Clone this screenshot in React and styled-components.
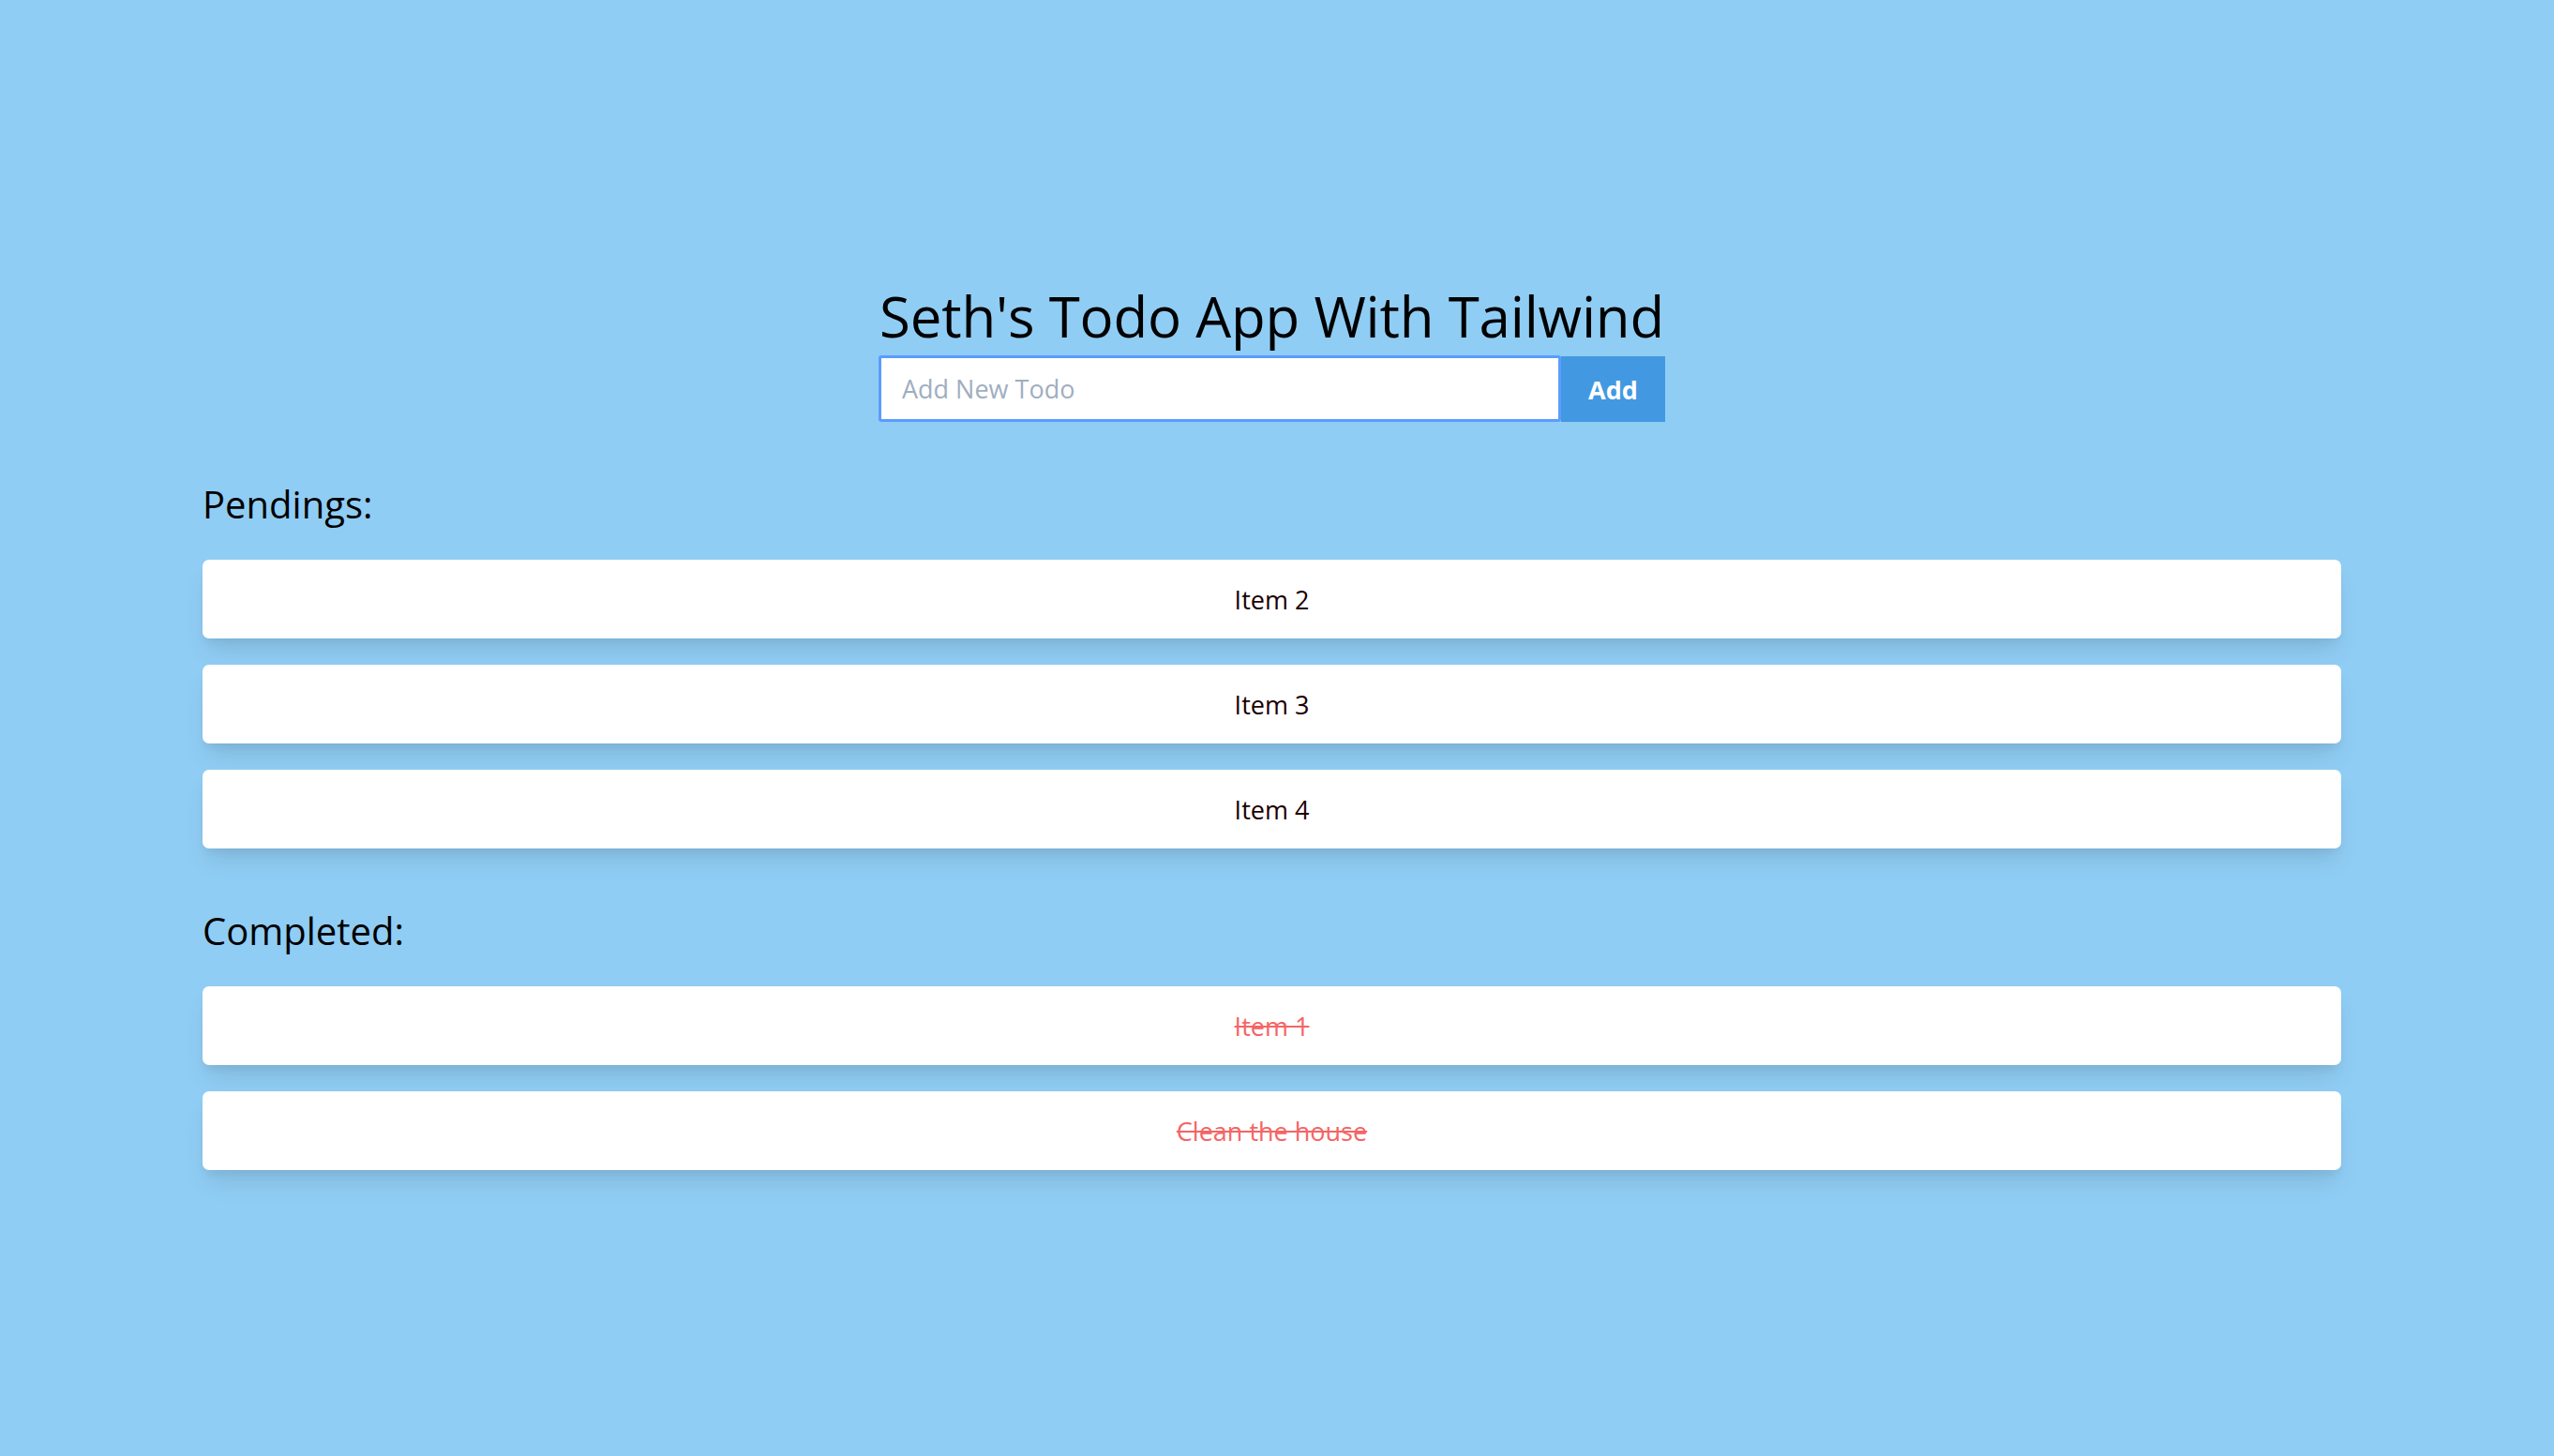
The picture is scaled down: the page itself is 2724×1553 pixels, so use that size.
import React, { useState } from 'react'
import styled, { createGlobalStyle } from 'styled-components'

const GlobalStyle = createGlobalStyle`
  html, body {
    margin: 0;
    padding: 0;
    background: #90cdf4;
    font-family: "Open Sans", "Noto Sans", sans-serif;
    color: #000;
  }
  * { box-sizing: border-box; }
`

const App = () => {
  const [todos] = useState([
    { id: 1, text: 'Item 1', done: true },
    { id: 2, text: 'Item 2', done: false },
    { id: 3, text: 'Item 3', done: false },
    { id: 4, text: 'Item 4', done: false },
    { id: 5, text: 'Clean the house', done: true },
  ])
  const [value, setValue] = useState('')

  const pending = todos.filter((t) => !t.done)
  const completed = todos.filter((t) => t.done)

  return (
    <Page>
      <GlobalStyle />
      <Header>
        <Title>Seth's Todo App With Tailwind</Title>
        <Form onSubmit={(e) => e.preventDefault()}>
          <Input
            placeholder="Add New Todo"
            value={value}
            onChange={(e) => setValue(e.target.value)}
          />
          <AddButton type="submit">Add</AddButton>
        </Form>
      </Header>

      <Section>
        <Label>Pendings:</Label>
        <List>
          {pending.map((t) => (
            <Card key={t.id}>
              <ItemText>{t.text}</ItemText>
            </Card>
          ))}
        </List>
      </Section>

      <Section>
        <Label>Completed:</Label>
        <List>
          {completed.map((t) => (
            <Card key={t.id}>
              <ItemText done>{t.text}</ItemText>
            </Card>
          ))}
        </List>
      </Section>
    </Page>
  )
}

export default App

const Page = styled.div`
  min-height: 100vh;
  padding: 302px 227px 120px 216px;
  background: #90cdf4;
`

const Header = styled.div`
  display: flex;
  flex-direction: column;
  align-items: center;
`

const Title = styled.h1`
  margin: 0 0 7px;
  font-size: 60px;
  line-height: 70px;
  font-weight: 400;
  letter-spacing: -0.2px;
`

const Form = styled.form`
  display: flex;
  width: 839px;
  height: 71px;
`

const Input = styled.input`
  flex: 1;
  min-width: 0;
  height: 100%;
  padding: 0 22px;
  border: 3px solid #5b9cff;
  border-radius: 3px;
  background: #fff;
  font-family: inherit;
  font-size: 27px;
  color: #2d3748;
  outline: none;

  &::placeholder {
    color: #a0aec0;
  }
`

const AddButton = styled.button`
  width: 111px;
  margin: 1px 0 0;
  border: none;
  background: #4299e1;
  color: #fff;
  font-family: inherit;
  font-size: 27px;
  font-weight: 700;
  cursor: pointer;
`

const Section = styled.section`
  margin-top: 60px;
`

const Label = styled.h2`
  margin: 0 0 31px;
  font-size: 40px;
  line-height: 56px;
  font-weight: 400;
`

const List = styled.div`
  display: flex;
  flex-direction: column;
  gap: 28px;
`

const Card = styled.div`
  height: 84px;
  display: flex;
  align-items: center;
  justify-content: center;
  background: #fff;
  border-radius: 7px;
  box-shadow: 0 17px 26px -5px rgba(0, 0, 0, 0.1), 0 7px 10px -3px rgba(0, 0, 0, 0.05);
`

const ItemText = styled.span`
  font-size: 27px;
  color: ${(p) => (p.done ? '#f56565' : '#1a0000')};
  text-decoration: ${(p) => (p.done ? 'line-through' : 'none')};
`
